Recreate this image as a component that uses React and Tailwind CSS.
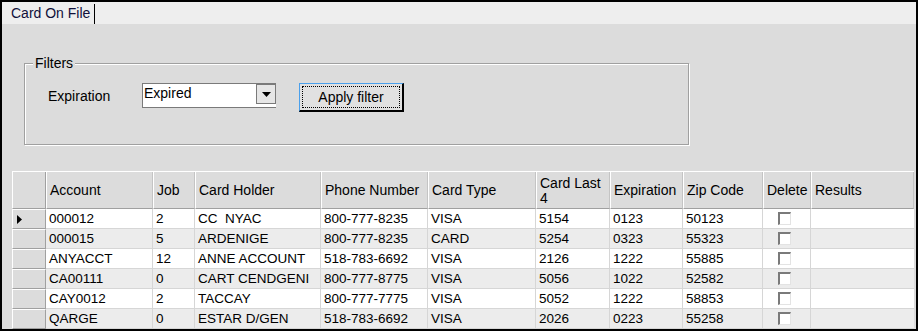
import React from 'react';

const cols = 'grid-cols-[34px_107px_42px_126px_107px_108px_74px_73px_80px_48px_103px]';

const headers = ['Account', 'Job', 'Card Holder', 'Phone Number', 'Card Type', 'Card Last 4', 'Expiration', 'Zip Code', 'Delete', 'Results'];

const rows = [
  ['000012', '2', 'CC  NYAC', '800-777-8235', 'VISA', '5154', '0123', '50123'],
  ['000015', '5', 'ARDENIGE', '800-777-8235', 'CARD', '5254', '0323', '55323'],
  ['ANYACCT', '12', 'ANNE ACCOUNT', '518-783-6692', 'VISA', '2126', '1222', '55885'],
  ['CA00111', '0', 'CART CENDGENI', '800-777-8775', 'VISA', '5056', '1022', '52582'],
  ['CAY0012', '2', 'TACCAY', '800-777-7775', 'VISA', '5052', '1222', '58853'],
  ['QARGE', '0', 'ESTAR D/GEN', '518-783-6692', 'VISA', '2026', '0223', '55258'],
];

function Checkbox() {
  return (
    <span className="block w-[13px] h-[13px] bg-white border-t-2 border-l-2 border-t-[#7a7a7a] border-l-[#7a7a7a] border-r border-b border-r-[#e3e3e3] border-b-[#e3e3e3]" />
  );
}

export default function App() {
  return (
    <div
      className="w-[918px] h-[331px] border-2 border-black bg-[#dcdcdc] flex flex-col overflow-hidden text-black"
      style={{ fontFamily: '"Liberation Sans", Arial, sans-serif' }}
    >
      {/* tab strip */}
      <div className="h-[22px] bg-[#eeeeee] flex items-end pl-[5px]">
        <div className="h-[20px] pl-[4px] pr-[4px] border-r border-black text-[14px] leading-[18px] text-[#10103a]">
          Card On File
        </div>
      </div>

      {/* filters group */}
      <div className="relative ml-[22px] mt-[39px] w-[665px] h-[82px] border border-[#a0a0a0] shadow-[inset_1px_1px_0_#fff,1px_1px_0_#fff]">
        <span className="absolute -top-[9px] left-[8px] px-[2px] bg-[#dcdcdc] text-[14px] leading-[16px]">
          Filters
        </span>
        <div className="flex items-start pl-[23px] pt-[19px]">
          <span className="w-[94px] shrink-0 mt-[5px] text-[14px] leading-[16px]">Expiration</span>
          <div className="w-[134px] h-[25px] bg-white border border-[#7a7a7a] border-r-0 flex items-start">
            <span className="flex-1 pl-[1px] text-[14px] leading-[16px] pt-[1px]">Expired</span>
            <span className="w-[20px] h-[20px] bg-[#e6e6e6] border border-[#7a7a7a] flex items-center justify-center">
              <svg width="9" height="5" viewBox="0 0 9 5">
                <path d="M0 0 H9 L4.5 5 Z" fill="#000" />
              </svg>
            </span>
          </div>
          <button className="ml-[23px] w-[105px] h-[29px] bg-[#e1e1e1] border-t border-l border-t-[#4aa0ec] border-l-[#4aa0ec] border-r-2 border-b-2 border-r-black border-b-black p-[2px]">
            <span className="flex items-center justify-center h-full border border-dotted border-black text-[14px] leading-[16px]">
              Apply filter
            </span>
          </button>
        </div>
      </div>

      {/* grid */}
      <div className="ml-[10px] mt-[26px] w-[902px] border-t border-white">
        <div className={`grid ${cols} h-[37px] bg-[#dcdcdc]`}>
          <div className="border-l border-l-white border-r border-b border-r-[#a0a0a0] border-b-[#a0a0a0]" />
          {headers.map((h) => (
            <div
              key={h}
              className="border-l border-l-white border-r border-r-[#c4c4c4] border-b border-b-[#a0a0a0] flex items-center pl-[3px] pr-[2px] pt-[1px] text-[14px] leading-[15px]"
            >
              {h === 'Card Last 4' ? (
                <span>Card Last<br />4</span>
              ) : (
                h
              )}
            </div>
          ))}
        </div>
        {rows.map((r, i) => (
          <div
            key={i}
            className={`grid ${cols} h-[20px] ${i % 2 === 1 ? 'bg-[#ececec]' : 'bg-white'}`}
          >
            <div className="bg-[#dcdcdc] border-l border-l-white border-t border-t-white border-r border-r-[#a0a0a0] border-b border-b-[#a0a0a0] flex items-center pl-[4px]">
              {i === 0 && (
                <svg width="5" height="9" viewBox="0 0 5 9">
                  <path d="M0 0 L5 4.5 L0 9 Z" fill="#000" />
                </svg>
              )}
            </div>
            {r.map((c, j) => (
              <div
                key={j}
                className="border-r border-b border-[#d6d6d6] flex items-center pl-[3px] text-[13.5px] leading-[16px] whitespace-pre overflow-hidden"
              >
                {c}
              </div>
            ))}
            <div className="border-r border-b border-[#d6d6d6] flex items-center justify-center pr-[4px]">
              <Checkbox />
            </div>
            <div className="border-b border-[#d6d6d6]" />
          </div>
        ))}
      </div>
    </div>
  );
}
